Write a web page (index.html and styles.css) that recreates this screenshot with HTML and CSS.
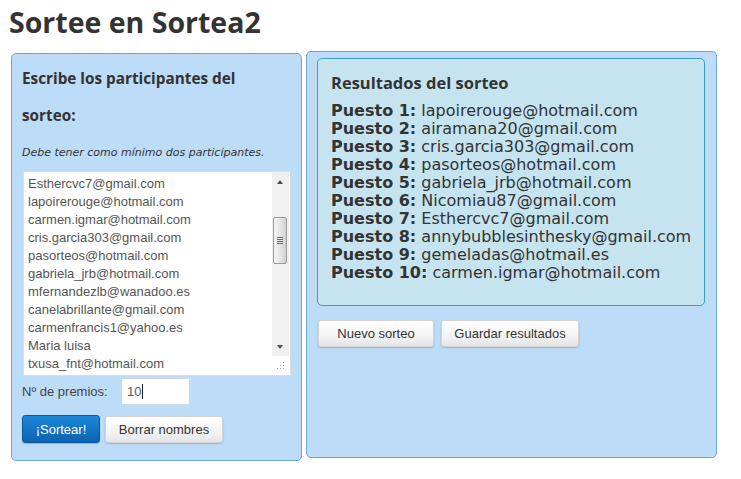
FILE: index.html
```html
<!DOCTYPE html>
<html lang="es">
<head>
<meta charset="utf-8">
<title>Sortee en Sortea2</title>
<link rel="stylesheet" href="styles.css">
</head>
<body>
<h1 class="title">Sortee en Sortea2</h1>
<div class="columns">
  <section class="panel panel-left">
    <h2 class="panel-heading">Escribe los participantes del sorteo:</h2>
    <p class="note">Debe tener como mínimo dos participantes.</p>
    <div class="textarea">
      <div class="ta-lines">
        <div>Esthercvc7@gmail.com</div>
        <div>lapoirerouge@hotmail.com</div>
        <div>carmen.igmar@hotmail.com</div>
        <div>cris.garcia303@gmail.com</div>
        <div>pasorteos@hotmail.com</div>
        <div>gabriela_jrb@hotmail.com</div>
        <div>mfernandezlb@wanadoo.es</div>
        <div>canelabrillante@gmail.com</div>
        <div>carmenfrancis1@yahoo.es</div>
        <div>Maria luisa</div>
        <div>txusa_fnt@hotmail.com</div>
      </div>
      <div class="scrollbar">
        <div class="sb-arrow sb-up"></div>
        <div class="sb-track"><div class="sb-thumb"><span></span><span></span><span></span><span></span></div></div>
        <div class="sb-arrow sb-down"></div>
        <div class="sb-grip">
          <svg width="9" height="9" viewBox="0 0 9 9"><g fill="#a8a8a8"><rect x="7" y="1" width="1" height="1"/><rect x="4" y="4" width="1" height="1"/><rect x="7" y="4" width="1" height="1"/><rect x="1" y="7" width="1" height="1"/><rect x="4" y="7" width="1" height="1"/><rect x="7" y="7" width="1" height="1"/></g></svg>
        </div>
      </div>
    </div>
    <div class="prize-row">
      <span class="prize-label">Nº de premios:</span>
      <div class="input">10<span class="caret"></span></div>
    </div>
    <div class="btn-row">
      <button class="btn btn-primary">¡Sortear!</button>
      <button class="btn btn-default btn-borrar">Borrar nombres</button>
    </div>
  </section>
  <section class="panel panel-right">
    <div class="results">
      <h2 class="results-heading">Resultados del sorteo</h2>
      <ol class="results-list">
        <li><b>Puesto 1:</b> lapoirerouge@hotmail.com</li>
        <li><b>Puesto 2:</b> airamana20@gmail.com</li>
        <li><b>Puesto 3:</b> cris.garcia303@gmail.com</li>
        <li><b>Puesto 4:</b> pasorteos@hotmail.com</li>
        <li><b>Puesto 5:</b> gabriela_jrb@hotmail.com</li>
        <li><b>Puesto 6:</b> Nicomiau87@gmail.com</li>
        <li><b>Puesto 7:</b> Esthercvc7@gmail.com</li>
        <li><b>Puesto 8:</b> annybubblesinthesky@gmail.com</li>
        <li><b>Puesto 9:</b> gemeladas@hotmail.es</li>
        <li><b>Puesto 10:</b> carmen.igmar@hotmail.com</li>
      </ol>
    </div>
    <div class="btn-row btn-row-right">
      <button class="btn btn-default btn-nuevo">Nuevo sorteo</button>
      <button class="btn btn-default btn-guardar">Guardar resultados</button>
    </div>
  </section>
</div>
</body>
</html>
```

FILE: styles.css
```css
* { box-sizing: border-box; }
html, body { margin: 0; padding: 0; background: #fff; }
body {
  font-family: "DejaVu Sans", Verdana, sans-serif;
  color: #333;
}
.title {
  margin: 0;
  padding: 3px 0 0 9px;
  height: 51px;
  font-family: "Open Sans", "DejaVu Sans", sans-serif;
  font-weight: 700;
  font-size: 28.5px;
  line-height: 38px;
  color: #333;
}
.columns {
  display: flex;
  align-items: flex-start;
  gap: 4px;
  padding-left: 11px;
}
.panel {
  background: #bcdcf8;
  border: 1px solid #6fa8cf;
  border-radius: 5px;
}
.panel-left {
  width: 291px;
  height: 408px;
  margin-top: 2px;
  padding: 6px 10px 0 10px;
}
.panel-right {
  width: 411px;
  height: 407px;
  padding: 6px 11px 0 10px;
}
.panel-heading {
  margin: 0;
  max-width: 250px;
  font-size: 15.3px;
  font-weight: 700;
  line-height: 37px;
  color: #333;
  font-family: "Open Sans", "DejaVu Sans", sans-serif;
}
.note {
  margin: 11px 0 0 0;
  font-size: 11px;
  line-height: 16px;
  font-style: italic;
  color: #333;
  font-family: "DejaVu Sans", Verdana, sans-serif;
}
.textarea {
  margin-top: 10px;
  margin-left: 1px;
  width: 268px;
  height: 205px;
  background: #fff;
  border: 1px solid #d6dde3;
  display: flex;
  overflow: hidden;
}
.ta-lines {
  flex: 1;
  padding: 3px 0 0 4px;
  font-family: "Liberation Sans", Arial, sans-serif;
  font-size: 13px;
  line-height: 18px;
  color: #555;
  white-space: nowrap;
}
.scrollbar {
  width: 17px;
  margin-right: 1px;
  display: flex;
  flex-direction: column;
  background: #f0f0f0;
}
.sb-arrow {
  height: 17px;
  position: relative;
}
.sb-up::after, .sb-down::after {
  content: "";
  position: absolute;
  left: 5px;
  width: 0; height: 0;
  border-left: 3.5px solid transparent;
  border-right: 3.5px solid transparent;
}
.sb-up::after { top: 8px; border-bottom: 4px solid #505050; }
.sb-down::after { top: 6px; border-top: 4px solid #505050; }
.sb-track {
  flex: 1;
  position: relative;
}
.sb-thumb {
  position: absolute;
  top: 28px;
  left: 1px;
  width: 14px;
  height: 47px;
  border: 1px solid #9a9a9a;
  border-radius: 2px;
  background: linear-gradient(to right, #f4f4f4, #e2e2e2 60%, #d0d0d0);
  display: flex;
  flex-direction: column;
  justify-content: center;
  align-items: center;
  gap: 1px;
}
.sb-thumb span {
  display: block;
  width: 6px;
  height: 1px;
  background: #6a6a6a;
}
.sb-grip {
  height: 19px;
  background: #fff;
  display: flex;
  align-items: center;
  justify-content: center;
}
.prize-row {
  display: flex;
  align-items: center;
  height: 28px;
  margin-top: 1px;
}
.prize-label {
  font-family: "Liberation Sans", Arial, sans-serif;
  font-size: 13px;
  color: #444;
  width: 100px;
}
.input {
  width: 69px;
  height: 27px;
  margin-left: -1px;
  background: #fff;
  border: 1px solid #cfd8e0;
  border-radius: 2px;
  font-family: "Liberation Sans", Arial, sans-serif;
  font-size: 13px;
  color: #555;
  padding: 5px 0 0 5px;
  line-height: 16px;
  display: flex;
}
.caret {
  display: inline-block;
  width: 1px;
  height: 15px;
  background: #222;
  margin-left: 1px;
}
.btn-row {
  display: flex;
  gap: 5px;
  margin-top: 10px;
}
.btn {
  font-family: "Liberation Sans", Arial, sans-serif;
  font-size: 13px;
  height: 28px;
  border-radius: 3px;
  padding: 0;
  cursor: pointer;
}
.btn-primary {
  width: 78px;
  color: #fff;
  border: 1px solid #0a5a9c;
  background: linear-gradient(to bottom, #1d87d8, #0c63b3);
  box-shadow: 0 1px 1px rgba(0,0,0,0.2);
}
.btn-default {
  color: #333;
  border: 1px solid #d3d3d3;
  background: linear-gradient(to bottom, #ffffff, #f3f3f3 60%, #e4e4e4);
  box-shadow: 0 1px 2px rgba(0,0,0,0.2);
}
.btn-borrar { width: 118px; height: 27px; margin-top: 1px; }
.results {
  height: 248px;
  background: #c5e4f0;
  border: 1px solid #3d9bc2;
  border-radius: 5px;
  padding: 12px 0 0 13px;
}
.results-heading {
  margin: 0;
  font-family: "Open Sans", "DejaVu Sans", sans-serif;
  font-size: 16.5px;
  font-weight: 700;
  line-height: 24px;
  color: #333;
}
.results-list {
  list-style: none;
  margin: 7px 0 0 0;
  padding: 0;
  font-size: 16px;
  line-height: 18px;
  color: #333;
  font-family: "DejaVu Sans", Verdana, sans-serif;
}
.results-list b {
  font-weight: 700;
}
.btn-row-right {
  margin-top: 14px;
  margin-left: 1px;
  gap: 7px;
}
.btn-nuevo { width: 116px; height: 27px; }
.btn-guardar { width: 138px; height: 27px; }
```
